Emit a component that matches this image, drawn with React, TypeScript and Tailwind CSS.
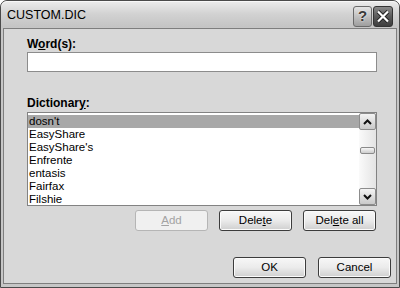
const font = { fontFamily: '"Liberation Sans", Arial, sans-serif' };

function Btn({
  children,
  disabled,
  w = "w-[73px]",
}: {
  children: React.ReactNode;
  disabled?: boolean;
  w?: string;
}) {
  return (
    <div
      className={`${w} h-[21px] flex items-center justify-center rounded-[3px] border text-[11.5px] ${
        disabled
          ? "border-[#b5b5b5] bg-[#f0f0f0] text-[#a3a3a3]"
          : "border-[#3c3c3c] bg-gradient-to-b from-[#f7f7f7] via-[#ebebeb] to-[#cfcfcf] text-black shadow-[inset_0_0_0_1px_#fbfbfb]"
      }`}
    >
      {children}
    </div>
  );
}

function Chevron({ up }: { up?: boolean }) {
  return (
    <svg width="9" height="6" viewBox="0 0 9 6">
      <polyline
        points={up ? "1,5 4.5,1.5 8,5" : "1,1 4.5,4.5 8,1"}
        fill="none"
        stroke="#111"
        strokeWidth="2"
      />
    </svg>
  );
}

const words = [
  "dosn't",
  "EasyShare",
  "EasyShare's",
  "Enfrente",
  "entasis",
  "Fairfax",
  "Filshie",
];

export default function App() {
  return (
    <div
      style={font}
      className="w-[400px] h-[288px] flex flex-col rounded-t-[7px] border border-[#4a4a4a] bg-[#c6c6c6] px-[2px] pb-[3px] overflow-hidden"
    >
      {/* Title bar */}
      <div className="h-[26px] flex items-center justify-between -mx-[2px] px-[6px] bg-gradient-to-b from-[#ececec] via-[#d2d2d2] to-[#c4c4c4] rounded-t-[6px] shadow-[inset_0_1px_0_#f8f8f8]">
        <span className="text-[12.5px] text-black mt-[2px]">CUSTOM.DIC</span>
        <div className="flex gap-[1px] mt-[4px] mr-[0px]">
          <div className="w-[19px] h-[21px] rounded-[3px] border border-[#6a6a6a] bg-gradient-to-b from-[#e4e4e4] to-[#9e9e9e] flex items-center justify-center text-[15px] font-bold text-[#3a3a3a] [text-shadow:0_0_2px_#fff]">
            ?
          </div>
          <div className="w-[20px] h-[21px] rounded-[3px] border border-[#333] bg-gradient-to-b from-[#8a8a8a] via-[#5a5a5a] to-[#3e3e3e] flex items-center justify-center">
            <svg width="14" height="13" viewBox="0 0 14 13">
              <path d="M2 1.5 L12 11.5 M12 1.5 L2 11.5" stroke="#222" strokeWidth="4" />
              <path d="M2 1.5 L12 11.5 M12 1.5 L2 11.5" stroke="#fff" strokeWidth="2.2" />
            </svg>
          </div>
        </div>
      </div>

      {/* Body */}
      <div className="flex-1 mt-[1px] border border-[#7e7e7e] bg-[#d8d8d8] flex flex-col pl-[23px] pr-[19px] pt-[8px]">
        <div className="text-[12px] font-bold leading-[14px] text-black">
          W<span className="underline">o</span>rd(s):
        </div>
        <div className="mt-[1px] h-[20px] border border-[#8c8c8c] bg-white" />

        <div className="mt-[24px] text-[12px] font-bold leading-[14px] text-black">
          Dictionar<span className="underline">y</span>:
        </div>
        <div className="mt-[2px] h-[94px] border border-[#828282] bg-white flex overflow-hidden">
          <div className="flex-1 pt-[2px] overflow-hidden">
            {words.map((w, i) => (
              <div
                key={w}
                className={`h-[13px] leading-[13px] pl-[1px] text-[11.5px] text-black ${
                  i === 0 ? "bg-[#a8a8a8]" : ""
                }`}
              >
                {w}
              </div>
            ))}
          </div>
          <div className="w-[17px] flex flex-col bg-gradient-to-r from-[#fafafa] to-[#e4e4e4]">
            <div className="h-[17px] rounded-[2px] border border-[#8c8c8c] bg-gradient-to-b from-[#f4f4f4] to-[#c9c9c9] flex items-center justify-center">
              <Chevron up />
            </div>
            <div className="flex-1 flex flex-col pt-[17px]">
              <div className="h-[7px] mx-[1px] rounded-[2px] border border-[#8a8a8a] bg-gradient-to-b from-[#f6f6f6] to-[#cdcdcd]" />
            </div>
            <div className="h-[17px] rounded-[2px] border border-[#8c8c8c] bg-gradient-to-b from-[#f4f4f4] to-[#c9c9c9] flex items-center justify-center">
              <Chevron />
            </div>
          </div>
        </div>

        <div className="mt-[4px] flex justify-end gap-[11px] pr-[1px]">
          <Btn disabled>
            <span>
              <span className="underline">A</span>dd
            </span>
          </Btn>
          <Btn>
            <span>
              Dele<span className="underline">t</span>e
            </span>
          </Btn>
          <Btn>
            <span>
              Del<span className="underline">e</span>te all
            </span>
          </Btn>
        </div>

        <div className="mt-auto mb-[5px] flex justify-end gap-[12px] -mr-[14px]">
          <Btn>OK</Btn>
          <Btn>Cancel</Btn>
        </div>
      </div>
    </div>
  );
}
